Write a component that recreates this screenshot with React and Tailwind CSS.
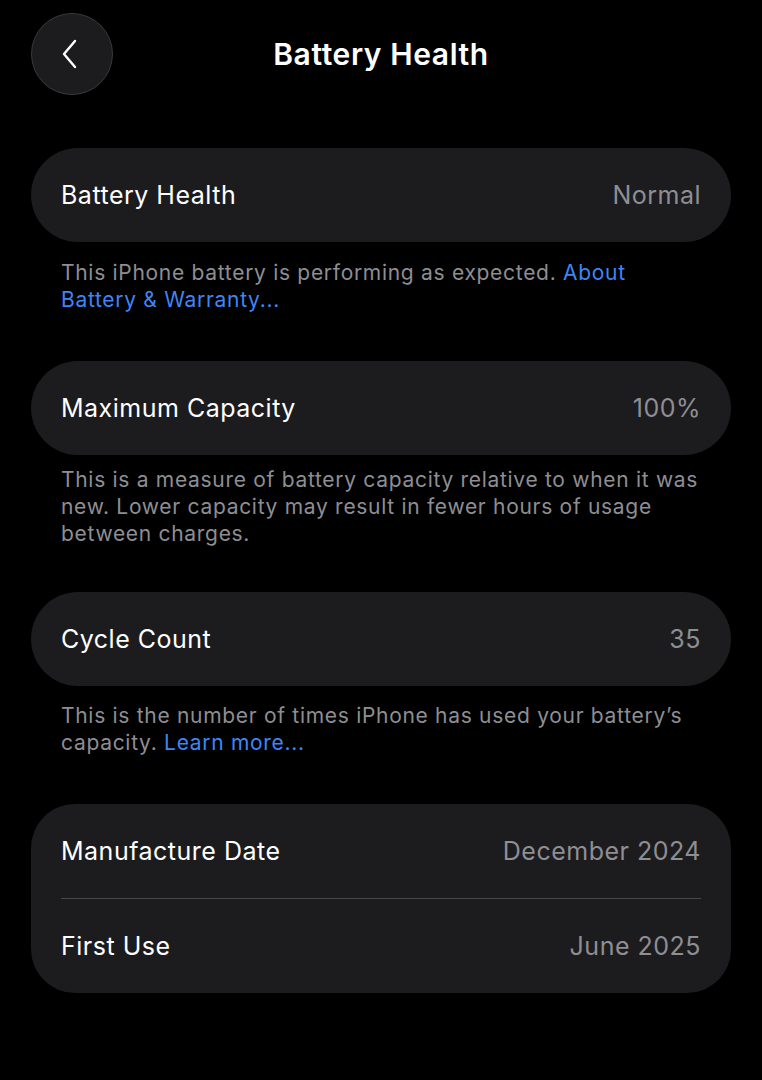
import React from 'react';

function Row({ label, value }) {
  return (
    <div className="flex h-[94px] items-center justify-between px-[30px] pt-px">
      <span className="text-[25px] tracking-[0.5px] text-white">{label}</span>
      <span className="text-[25px] tracking-[0.5px] text-[#8e8e93]">{value}</span>
    </div>
  );
}

function Card({ children, className = '' }) {
  return <div className={`mx-[31px] bg-[#1c1c1e] ${className}`}>{children}</div>;
}

function Note({ children, className = '' }) {
  return (
    <p className={`mx-[61px] text-[21px] leading-[27px] tracking-[0.7px] text-[#8e8e93] ${className}`}>
      {children}
    </p>
  );
}

export default function App() {
  return (
    <div
      className="min-h-[1080px] w-[762px] bg-black pt-[13px]"
      style={{ fontFamily: 'Inter, "Noto Sans", sans-serif' }}
    >
      {/* Header */}
      <div className="relative flex h-[82px] items-center justify-center">
        <button className="absolute left-[31px] top-0 flex h-[82px] w-[82px] items-center justify-center rounded-full border border-[#3a3a3c] bg-[#1c1c1e]">
          <svg width="18" height="30" viewBox="0 0 18 30" className="-ml-[4px]">
            <path
              d="M14 2 L3 15 L14 28"
              fill="none"
              stroke="white"
              strokeWidth="2.4"
              strokeLinecap="round"
              strokeLinejoin="round"
            />
          </svg>
        </button>
        <h1 className="text-[30px] font-semibold tracking-[0.6px] text-white">Battery Health</h1>
      </div>

      {/* Battery Health */}
      <Card className="mt-[53px] rounded-full">
        <Row label="Battery Health" value="Normal" />
      </Card>
      <Note className="mt-[17px]">
        This iPhone battery is performing as expected.{' '}
        <span className="text-[#3e86f5]">About Battery &amp; Warranty...</span>
      </Note>

      {/* Maximum Capacity */}
      <Card className="mt-[48px] rounded-full">
        <Row label="Maximum Capacity" value="100%" />
      </Card>
      <Note className="mt-[11px]">
        This is a measure of battery capacity relative to when it was new. Lower capacity may
        result in fewer hours of usage between charges.
      </Note>

      {/* Cycle Count */}
      <Card className="mt-[45px] rounded-full">
        <Row label="Cycle Count" value="35" />
      </Card>
      <Note className="mt-[16px]">
        This is the number of times iPhone has used your battery’s capacity.{' '}
        <span className="text-[#3e86f5]">Learn more...</span>
      </Note>

      {/* Dates */}
      <Card className="mt-[48px] rounded-[44px]">
        <Row label="Manufacture Date" value="December 2024" />
        <div className="mx-[30px] h-px bg-[#48484a]" />
        <Row label="First Use" value="June 2025" />
      </Card>
    </div>
  );
}
